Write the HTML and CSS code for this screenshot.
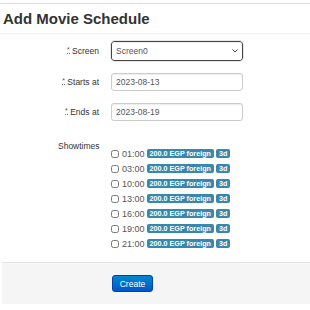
FILE: index.html
```html
<!DOCTYPE html>
<html lang="en">
<head>
    <meta charset="UTF-8">
    <meta name="viewport" content="width=device-width, initial-scale=1.0">
    <title>Add Movie Schedule</title>
    <link rel="stylesheet" href="styles.css">
</head>
<body>
    <div class="topbar"></div>

    <div class="page-header">
        <h1>Add Movie Schedule</h1>
    </div>

    <form class="form-horizontal" onsubmit="return false;">
        <div class="control-group">
            <label class="control-label" for="screen"><abbr title="required">*</abbr> Screen</label>
            <div class="controls">
                <span class="select-wrap">
                    <select id="screen" class="select-focus">
                        <option>Screen0</option>
                    </select>
                    <svg class="chevron" width="6" height="4" viewBox="0 0 6 4">
                        <path d="M0.5 0.5 L3 3 L5.5 0.5" fill="none" stroke="#444" stroke-width="1"/>
                    </svg>
                </span>
            </div>
        </div>

        <div class="control-group">
            <label class="control-label" for="starts-at"><abbr title="required">*</abbr> Starts at</label>
            <div class="controls">
                <input type="text" id="starts-at" value="2023-08-13">
            </div>
        </div>

        <div class="control-group">
            <label class="control-label" for="ends-at"><abbr title="required">*</abbr> Ends at</label>
            <div class="controls">
                <input type="text" id="ends-at" value="2023-08-19">
            </div>
        </div>

        <div class="showtimes">
            <div class="showtimes-label">Showtimes</div>
            <div class="controls">
                <ul class="showtime-list">
                    <li><label><input type="checkbox"> 01:00</label> <span class="label">200.0 EGP foreign</span> <span class="label">3d</span></li>
                    <li><label><input type="checkbox"> 03:00</label> <span class="label">200.0 EGP foreign</span> <span class="label">3d</span></li>
                    <li><label><input type="checkbox"> 10:00</label> <span class="label">200.0 EGP foreign</span> <span class="label">3d</span></li>
                    <li><label><input type="checkbox"> 13:00</label> <span class="label">200.0 EGP foreign</span> <span class="label">3d</span></li>
                    <li><label><input type="checkbox"> 16:00</label> <span class="label">200.0 EGP foreign</span> <span class="label">3d</span></li>
                    <li><label><input type="checkbox"> 19:00</label> <span class="label">200.0 EGP foreign</span> <span class="label">3d</span></li>
                    <li><label><input type="checkbox"> 21:00</label> <span class="label">200.0 EGP foreign</span> <span class="label">3d</span></li>
                </ul>
            </div>
        </div>

        <div class="form-actions">
            <button type="submit" class="btn-primary">Create</button>
        </div>
    </form>
</body>
</html>
```

FILE: styles.css
```css
body {
    font-family: "Liberation Sans", Arial, sans-serif;
    font-size: 8.5px;
    color: #333;
    margin: 0;
    padding: 0;
    background-color: white;
}

.topbar {
    height: 3px;
    border-bottom: 1px solid #ddd;
}

.page-header {
    border-bottom: 1px solid #f0f0f0;
    padding: 5px 3px 4px;
    margin: 0 0 7px;
}

h1 {
    margin: 0;
    font-size: 15px;
    line-height: 20px;
    font-weight: bold;
    color: #333;
}

.form-horizontal {
    margin: 0;
}

.control-group {
    display: flex;
    align-items: center;
    margin-bottom: 12px;
}

.control-label {
    width: 99px;
    text-align: right;
    color: #333;
}

.control-label abbr {
    text-decoration: none;
    border-bottom: 1px dotted #777;
    font-size: 7px;
    vertical-align: 2px;
    color: #555;
}

.controls {
    margin-left: 12px;
}

input[type="text"],
select {
    box-sizing: border-box;
    width: 132px;
    height: 18px;
    padding: 1px 4px;
    font-family: inherit;
    font-size: 8.5px;
    color: #555;
    background-color: white;
    border: 1px solid #ccc;
    border-radius: 3px;
    box-shadow: inset 0 1px 1px rgba(0, 0, 0, 0.075);
}

.select-wrap {
    position: relative;
    display: inline-block;
}

select {
    display: block;
    height: 20px;
    -webkit-appearance: none;
    appearance: none;
}

.select-focus {
    border: 1px solid #444;
    outline: 1px solid #e8e8e8;
}

.chevron {
    position: absolute;
    right: 5px;
    top: 8px;
}

.showtimes {
    margin-top: 20px;
}

.showtimes-label {
    padding-left: 58px;
    line-height: 10px;
    margin-bottom: -5px;
}

.showtimes .controls {
    margin-left: 111px;
}

.showtime-list {
    list-style: none;
    margin: 0;
    padding: 0;
}

.showtime-list li {
    display: flex;
    align-items: center;
    height: 15px;
    color: #555;
}

.showtime-list label {
    display: flex;
    align-items: center;
    font-size: 9px;
}

.showtime-list input[type="checkbox"] {
    width: 8px;
    height: 8px;
    margin: 0 3px 0 0;
}

.label {
    display: inline-block;
    margin-left: 2px;
    padding: 1px 3px;
    font-size: 7.2px;
    font-weight: bold;
    line-height: 7px;
    color: white;
    background-color: #3a87ad;
    border-radius: 2px;
}

.form-actions {
    margin: 11px 0 0 2px;
    padding: 12px 0 12px 110px;
    height: 17px;
    background-color: #f5f5f5;
    border-top: 1px solid #e5e5e5;
}

.btn-primary {
    width: 41px;
    height: 17px;
    padding: 0;
    font-family: inherit;
    font-size: 8.5px;
    color: white;
    background-color: #0074cc;
    background-image: linear-gradient(to bottom, #0088cc, #0055cc);
    border: 1px solid #0044aa;
    border-radius: 3px;
    cursor: pointer;
}
```
